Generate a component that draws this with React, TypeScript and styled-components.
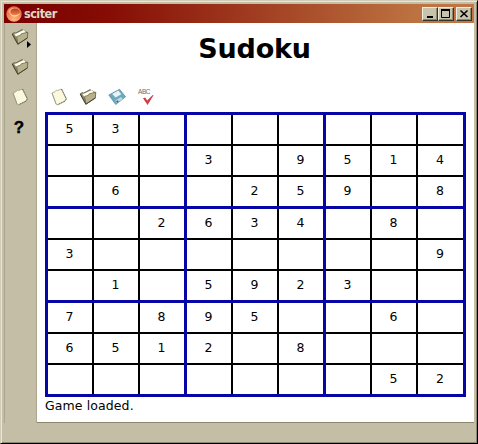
import React from "react";
import styled, { createGlobalStyle } from "styled-components";

const GlobalStyle = createGlobalStyle`
  * { box-sizing: border-box; }
  body { margin: 0; background: #c3bea5; overflow: hidden; }
`;

const Frame = styled.div`
  width: 478px;
  height: 444px;
  display: flex;
  flex-direction: column;
  padding: 3px 2px 0 3px;
  background: #c3bea5;
  border: 1px solid #000;
  border-top-color: #d0ccb8;
  border-left-color: #d0ccb8;
  box-shadow: inset 1px 1px #e9e6d6, inset -1px -1px #8c8870;
  font-family: "DejaVu Sans", Verdana, sans-serif;
  color: #000;
`;

const TitleBar = styled.header`
  height: 19px;
  flex: none;
  width: 470px;
  display: flex;
  align-items: center;
  padding: 0 2px;
  background: linear-gradient(90deg, #780000 0%, #860c04 22%, #bd7341 88%, #bf7644 100%);
`;

const TitleText = styled.span`
  flex: 1;
  margin-left: 2px;
  font: bold 12.5px/18px "DejaVu Sans Condensed", "DejaVu Sans", sans-serif;
  font-stretch: condensed;
  letter-spacing: -0.5px;
  color: #dfd9c8;
`;

const Caption = styled.div`
  display: flex;
`;

const CaptionButton = styled.button<{ $spaced?: boolean }>`
  width: 16px;
  height: 14px;
  padding: 0;
  display: flex;
  margin-left: ${(p) => (p.$spaced ? 2 : 0)}px;
  background: #c8c3ad;
  border: 1px solid;
  border-color: #f1eedf #35332a #35332a #f1eedf;
  box-shadow: inset -1px -1px #8d8972;
`;

const Body = styled.div`
  display: flex;
  width: 470px;
  height: 400px;
`;

const SideBar = styled.nav`
  width: 33px;
  flex: none;
  display: flex;
  flex-direction: column;
  padding: 4px 0 0 5px;
  gap: 10px;
  border-left: 1px solid #aaa58d;
  border-right: 1px solid #aaa58c;
`;

const IconButton = styled.button`
  width: 24px;
  height: 20px;
  padding: 0;
  border: 0;
  background: none;
  display: flex;
  align-items: center;
  color: #000;

  svg {
    overflow: visible;
  }
`;

const HelpGlyph = styled.span`
  width: 18px;
  padding-top: 2px;
  font: bold 17px/20px "Liberation Sans", sans-serif;
  -webkit-text-stroke: 0.4px #000;
  text-align: center;
`;

const Content = styled.main`
  width: 437px;
  height: 400px;
  padding: 0 8px;
  background: #fff;
  border-bottom: 1px solid #8b876f;
`;

const Heading = styled.h1`
  margin: 0;
  padding: 9px 2px 0 0;
  height: 64px;
  font: bold 27px/34px "DejaVu Sans", Verdana, sans-serif;
  letter-spacing: -0.2px;
  text-align: center;
`;

const ToolBar = styled.div`
  display: flex;
  height: 25px;
  padding-left: 4px;
  gap: 5px;
`;

const Board = styled.div`
  width: 421px;
  height: 285px;
  display: grid;
  grid-template-columns: 136px 136px 137px;
  grid-template-rows: repeat(3, 91px);
  gap: 3px;
  padding: 3px;
  background: #0606a6;
`;

const Box = styled.div`
  display: grid;
  grid-template-columns: 44px 44px 1fr;
  grid-template-rows: repeat(3, 29px);
  gap: 2px;
  background: #000;
`;

const Cell = styled.div`
  padding-right: 1px;
  background: #fff;
  font-size: 12.5px;
  line-height: 28px;
  text-align: center;
`;

const Status = styled.div`
  font-size: 12.5px;
  line-height: 17px;
  letter-spacing: 0.1px;
`;

const rows = [
  "53.......",
  "...3.9514",
  ".6..259.8",
  "..2634.8.",
  "3.......9",
  ".1.5923..",
  "7.895..6.",
  "6512.8...",
  ".......52",
];

const boxes = Array.from({ length: 9 }, (_, b) =>
  Array.from({ length: 9 }, (_, i) => {
    const row = Math.floor(b / 3) * 3 + Math.floor(i / 3);
    const col = (b % 3) * 3 + (i % 3);
    return rows[row][col];
  })
);

function Folder({ arrow = false }: { arrow?: boolean }) {
  return (
    <svg width="24" height="20" viewBox="0 0 24 20">
      <path d="M2.2 6.8l2.2-1.3 1.3.5L12 2.6l5.6 3.2-.5 5-9.3 6.3z" fill="#8d8865" stroke="#5c583d" strokeWidth=".7" />
      <path d="M4.2 6.8l1.6-.1L13.6 3l2.6 2.2L6.6 10.6z" fill="#fffdeb" />
      <path d="M6.6 9.4l3.6-1 1-1.6 6.6-1.6-.5 6-9.4 6z" fill="#b7b18d" stroke="#656044" strokeWidth=".7" />
      <path d="M2.2 7l5.6 10.2 9.6-6.3" fill="none" stroke="#3f3c29" strokeWidth=".9" />
      {arrow && <path d="M17 14l4 3.5-4 3.5z" fill="#000" />}
    </svg>
  );
}

function Paper() {
  return (
    <svg width="24" height="20" viewBox="0 0 24 20">
      <path d="M3 6l3.2-1.4L7.5 3l1.2.5L12.5 2l4.8 9.8-1.3 2.3-7.5 3.7-1.3-.5z" fill="#fbf9dd" stroke="#9b967b" strokeWidth=".7" />
      <path d="M12.5 2l4.8 9.8-1.3 2.3-7.5 3.7" fill="none" stroke="#5d5945" strokeWidth=".8" strokeDasharray="2 .7" />
      <path d="M3 6l4.2 11.3" fill="none" stroke="#8e8a75" strokeWidth=".6" />
    </svg>
  );
}

function Disk() {
  return (
    <svg width="24" height="20" viewBox="0 0 24 20">
      <path d="M1.8 8L12.5 2.3 18.6 9.8 8.7 17.5z" fill="#6aaabf" stroke="#5489a0" strokeWidth=".7" />
      <path d="M5.2 7L11.3 3.6l3 3.6L8.6 10.6z" fill="#e7f2f5" />
      <path d="M8.3 13.6l5.7-3.6 1.8 2-6.2 4.3z" fill="#c6d6db" />
      <path d="M9 14.2l1.5-1 1.3 1.6-1.5 1z" fill="#35677e" />
    </svg>
  );
}

function SpellCheck() {
  return (
    <svg width="24" height="20" viewBox="0 0 24 20">
      <text x="2" y="7" fontFamily="Liberation Sans, sans-serif" fontSize="6.5" fill="#6a6a6e" textLength="12.5">ABC</text>
      <path d="M7 11.2l2.2-.8 2 3.1 5.5-5.6.8.3-5.9 9.9z" fill="#cc3f46" />
    </svg>
  );
}

function AppLogo() {
  return (
    <svg width="16" height="16" viewBox="0 0 16 16">
      <defs>
        <radialGradient id="orb" cx=".5" cy=".85" r=".8">
          <stop offset="0" stopColor="#ffb67d" />
          <stop offset=".6" stopColor="#f28350" />
          <stop offset="1" stopColor="#e7683b" />
        </radialGradient>
        <linearGradient id="core" x1="0" y1="0" x2="0" y2="1">
          <stop offset="0" stopColor="#b93a1d" />
          <stop offset="1" stopColor="#f0864d" />
        </linearGradient>
      </defs>
      <circle cx="8" cy="8" r="7.7" fill="url(#orb)" />
      <path d="M2 5.5C3.5 1.2 10 .2 13.2 4L12 6C9 3 5.5 4 4 8z" fill="#f9a77c" />
      <ellipse cx="9" cy="6" rx="4.5" ry="3.6" fill="url(#core)" />
      <path d="M3.6 5.8c1 3.8 6.5 4.8 10.2 1.2-1.6 5.2-9.6 5.4-10.2-1.2z" fill="#ffd3a2" />
    </svg>
  );
}

export default function App() {
  return (
    <>
      <GlobalStyle />
      <Frame>
        <TitleBar>
          <AppLogo />
          <TitleText>sciter</TitleText>
          <Caption>
            <CaptionButton aria-label="Minimize">
              <svg width="14" height="12"><path d="M4 9h6" stroke="#000" strokeWidth="2" /></svg>
            </CaptionButton>
            <CaptionButton aria-label="Maximize">
              <svg width="14" height="12"><path d="M2.5 2v7.5h8V2M2 2h9" fill="none" stroke="#000" /><path d="M2 2h9" stroke="#000" strokeWidth="2" /></svg>
            </CaptionButton>
            <CaptionButton $spaced aria-label="Close">
              <svg width="14" height="12"><path d="M3.5 2.5l7 6.5m0-6.5l-7 6.5" stroke="#000" strokeWidth="1.6" /></svg>
            </CaptionButton>
          </Caption>
        </TitleBar>
        <Body>
          <SideBar>
            <IconButton aria-label="Recent"><Folder arrow /></IconButton>
            <IconButton aria-label="Open"><Folder /></IconButton>
            <IconButton aria-label="New"><Paper /></IconButton>
            <IconButton aria-label="Help"><HelpGlyph>?</HelpGlyph></IconButton>
          </SideBar>
          <Content>
            <Heading>Sudoku</Heading>
            <ToolBar>
              <IconButton aria-label="New game"><Paper /></IconButton>
              <IconButton aria-label="Open game"><Folder /></IconButton>
              <IconButton aria-label="Save game"><Disk /></IconButton>
              <IconButton aria-label="Check"><SpellCheck /></IconButton>
            </ToolBar>
            <Board>
              {boxes.map((cells, b) => (
                <Box key={b}>
                  {cells.map((value, i) => (
                    <Cell key={i}>{value === "." ? "" : value}</Cell>
                  ))}
                </Box>
              ))}
            </Board>
            <Status>Game loaded.</Status>
          </Content>
        </Body>
      </Frame>
    </>
  );
}
